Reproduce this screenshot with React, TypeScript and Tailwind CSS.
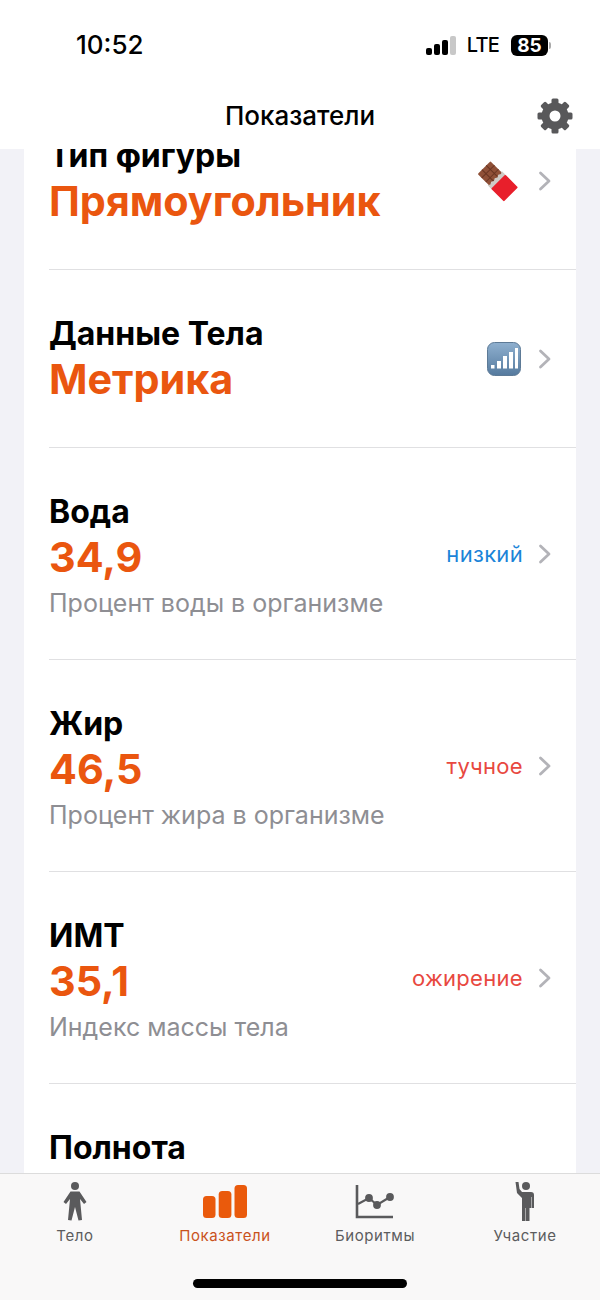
const GEAR_TEETH = [0, 45, 90, 135, 180, 225, 270, 315];

function Gear() {
  return (
    <svg width="36" height="36" viewBox="0 0 36 36" className="absolute right-[27px] top-[-2px]">
      {GEAR_TEETH.map((a) => (
        <rect key={a} x="14.5" y="0.5" width="7" height="8" rx="1.5" fill="#58585a" transform={`rotate(${a} 18 18)`} />
      ))}
      <circle cx="18" cy="18" r="9.5" fill="none" stroke="#58585a" strokeWidth="8" />
    </svg>
  );
}

function Chevron() {
  return (
    <svg width="14" height="20" viewBox="0 0 14 20" fill="none" className="shrink-0">
      <path d="M2.5 2 L11 10 L2.5 18" stroke="#b3b3b8" strokeWidth="2.8" strokeLinecap="round" strokeLinejoin="round" />
    </svg>
  );
}

function Chocolate() {
  return (
    <svg width="44" height="44" viewBox="0 0 44 44" className="mr-[2px]">
      <g transform="rotate(-45 20.5 22)">
        <rect x="11.5" y="3" width="18" height="17" rx="1" fill="#8f5037" />
        <path d="M17.5 3V20M23.5 3V20M11.5 8.7H29.5M11.5 14.4H29.5" stroke="#693522" strokeWidth="1" />
        <path d="M10.5 18 L13 19.5 L15.5 18 L18 19.5 L20.5 18 L23 19.5 L25.5 18 L28 19.5 L30.5 18 V24 H10.5 Z" fill="#cfcbc6" />
        <rect x="10.5" y="23" width="20" height="18" rx="1" fill="#e81f2b" />
      </g>
    </svg>
  );
}

function SignalEmoji() {
  return (
    <svg width="34" height="34" viewBox="0 0 34 34" className="mr-[2px]">
      <defs>
        <linearGradient id="sig" x1="0" y1="0" x2="0" y2="1">
          <stop offset="0" stopColor="#8fb0cf" />
          <stop offset="1" stopColor="#557a9e" />
        </linearGradient>
      </defs>
      <rect x="0.5" y="0.5" width="33" height="33" rx="7" fill="url(#sig)" stroke="#5d7a96" />
      <rect x="4" y="23" width="3.5" height="3.5" fill="#fff" />
      <rect x="10" y="19" width="4" height="7.5" fill="#fff" />
      <rect x="16" y="14" width="4" height="12.5" fill="#fff" />
      <rect x="22" y="10" width="4" height="16.5" fill="#fff" />
      <rect x="28" y="6" width="3" height="20.5" fill="#fff" />
    </svg>
  );
}

function Row({ title, value, desc, right }: { title: string; value: string; desc?: string; right: React.ReactNode }) {
  return (
    <div className={"flex items-center pl-[25px] pr-[24px] " + (desc ? "h-[211px]" : "h-[177px]")}>
      <div className={"flex-1 " + (desc ? "pt-[5px]" : "pt-[3px]")}>
        <div className="text-[32px] leading-[36px] font-bold text-black">{title}</div>
        <div className="text-[41.3px] leading-[50px] font-bold text-[#ea560f] mt-[2px]">{value}</div>
        {desc && <div className="text-[25px] leading-[32px] text-[#8e8e93] mt-[5px]">{desc}</div>}
      </div>
      <div className="flex items-center gap-[15px]">
        {right}
        <Chevron />
      </div>
    </div>
  );
}

function Status({ text, color }: { text: string; color: string }) {
  return <span className={"text-[22px] tracking-[0.3px] pt-[2px] " + color}>{text}</span>;
}

function Divider() {
  return <div className="h-px bg-[#e0e0e2] ml-[25px]" />;
}

function Tab({ label, active, children }: { label: string; active?: boolean; children: React.ReactNode }) {
  return (
    <div className="flex flex-col items-center w-[150px]">
      <div className="h-[39px] flex items-center">{children}</div>
      <div className={"text-[15px] leading-[20px] mt-[5px] tracking-[0.6px] " + (active ? "text-[#c9521c]" : "text-[#5c5c5e]")}>{label}</div>
    </div>
  );
}

export default function App() {
  return (
    <div className="w-[600px] h-[1300px] overflow-hidden flex flex-col bg-[#f2f2f7] font-['Inter','Liberation_Sans',sans-serif]">
      <header className="h-[149px] shrink-0 bg-white relative z-10">
        <div className="flex items-center justify-between pl-[76px] pr-[49px] pt-[28px]">
          <span className="text-[26px] leading-[34px] font-medium text-black">10:52</span>
          <div className="flex items-center">
            <div className="flex items-end gap-[2px] h-[19px]">
              <span className="w-[6px] h-[7px] rounded-[2px] bg-black" />
              <span className="w-[6px] h-[11px] rounded-[2px] bg-black" />
              <span className="w-[6px] h-[15px] rounded-[2px] bg-black" />
              <span className="w-[6px] h-[19px] rounded-[2px] bg-[#c8c8c8]" />
            </div>
            <span className="ml-[11px] text-[20px] font-medium leading-none text-black tracking-[-0.8px]">LTE</span>
            <div className="ml-[12px] w-[37px] h-[21px] rounded-[6px] bg-black text-white text-[19px] font-bold leading-[21px] text-center">85</div>
            <span className="ml-[1px] w-[2px] h-[7px] rounded-r bg-[#aaa]" />
          </div>
        </div>
        <div className="relative mt-[38px] flex justify-center">
          <span className="text-[26px] leading-[32px] font-medium text-black">Показатели</span>
          <Gear />
        </div>
      </header>
      <main className="flex-1 overflow-hidden px-[24px]">
        <div className="bg-white mt-[-57px] h-[1200px]">
          <Row title="Тип фигуры" value="Прямоугольник" right={<Chocolate />} />
          <Divider />
          <Row title="Данные Тела" value="Метрика" right={<SignalEmoji />} />
          <Divider />
          <Row title="Вода" value="34,9" desc="Процент воды в организме" right={<Status text="низкий" color="text-[#1a84d8]" />} />
          <Divider />
          <Row title="Жир" value="46,5" desc="Процент жира в организме" right={<Status text="тучное" color="text-[#e8483f]" />} />
          <Divider />
          <Row title="ИМТ" value="35,1" desc="Индекс массы тела" right={<Status text="ожирение" color="text-[#e8483f]" />} />
          <Divider />
          <div className="pl-[25px] pt-[46px] text-[32px] leading-[36px] font-bold text-black">Полнота</div>
        </div>
      </main>
      <nav className="h-[127px] shrink-0 relative border-t border-[#dcdcdc] bg-[#f9f8f8] flex justify-between pt-[8px]">
        <Tab label="Тело">
          <svg width="24" height="39" viewBox="0 0 24 39" fill="#5a5a5c">
            <circle cx="12" cy="4" r="4" />
            <path d="M7.5 9.5 H16.5 L23.5 20 L21 22 L17 17 L19 38 L15.5 38.5 L12 25 L8.5 38.5 L5 38 L7 17 L3 22 L0.5 20 Z" />
          </svg>
        </Tab>
        <Tab label="Показатели" active>
          <svg width="44" height="33" viewBox="0 0 44 33" fill="#ea5a0c">
            <rect x="0" y="11" width="12.5" height="22" rx="3.5" />
            <rect x="15.7" y="6" width="12.7" height="27" rx="3.5" />
            <rect x="31.5" y="0" width="12.5" height="33" rx="3.5" />
          </svg>
        </Tab>
        <Tab label="Биоритмы">
          <svg width="40" height="34" viewBox="0 0 40 34" fill="none" stroke="#5a5a5c" strokeWidth="2.6">
            <path d="M2 0 V32 H38" />
            <path d="M3 19 L14 13 L22 20 L35 12" strokeWidth="2.2" />
            <circle cx="14" cy="13" r="2.6" fill="#5a5a5c" />
            <circle cx="22" cy="20" r="2.6" fill="#5a5a5c" />
            <circle cx="35" cy="12" r="2.6" fill="#5a5a5c" />
          </svg>
        </Tab>
        <Tab label="Участие">
          <svg width="20" height="39" viewBox="0 0 20 39" fill="#5a5a5c">
            <circle cx="11" cy="4" r="4" />
            <path d="M0.5 0 L3.5 0 L4.5 7 L7 10 H16 Q19 10 19 13 V26 H16.5 V15 H16 V26 H14.5 V39 H11 V26 H10.5 V39 H7 V16 L2 11 Z" />
          </svg>
        </Tab>
        <div className="absolute left-[193px] top-[105px] w-[214px] h-[9px] rounded-full bg-black" />
      </nav>
    </div>
  );
}
